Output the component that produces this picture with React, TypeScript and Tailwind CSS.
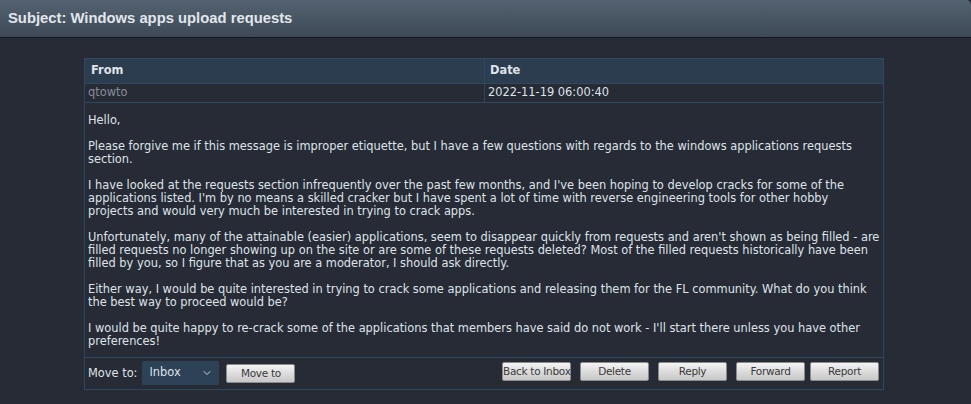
import { ChevronDown } from 'lucide-react';

const paragraphs: string[][] = [
  ['Hello,'],
  [
    'Please forgive me if this message is improper etiquette, but I have a few questions with regards to the windows applications requests',
    'section.',
  ],
  [
    "I have looked at the requests section infrequently over the past few months, and I've been hoping to develop cracks for some of the",
    "applications listed. I'm by no means a skilled cracker but I have spent a lot of time with reverse engineering tools for other hobby",
    'projects and would very much be interested in trying to crack apps.',
  ],
  [
    "Unfortunately, many of the attainable (easier) applications, seem to disappear quickly from requests and aren't shown as being filled - are",
    'filled requests no longer showing up on the site or are some of these requests deleted? Most of the filled requests historically have been',
    'filled by you, so I figure that as you are a moderator, I should ask directly.',
  ],
  [
    'Either way, I would be quite interested in trying to crack some applications and releasing them for the FL community. What do you think',
    'the best way to proceed would be?',
  ],
  [
    "I would be quite happy to re-crack some of the applications that members have said do not work - I'll start there unless you have other",
    'preferences!',
  ],
];

const actions = ['Back to Inbox', 'Delete', 'Reply', 'Forward'];

function GrayButton({ label, className = '' }: { label: string; className?: string }) {
  return (
    <button
      type="button"
      className={`h-[19px] whitespace-nowrap rounded-[2px] border border-[#8c8c8c] bg-[linear-gradient(#f4f4f4,#dcdcdc_50%,#c8c8c8)] px-0 text-[10.5px] leading-none tracking-[-0.3px] text-[#3a3a3a] ${className}`}
    >
      {label}
    </button>
  );
}

export default function App() {
  return (
    <div className="min-h-[404px] bg-[#262b36] font-['DejaVu_Sans',Verdana,sans-serif] text-[#dfe3e8]">
      <div className="flex h-[38px] items-center rounded-tr-[5px] border-b border-[#14181e] bg-[linear-gradient(#546271,#3d4956)] px-2">
        <h1 className="font-['Liberation_Sans',Arial,sans-serif] text-[14.8px] font-bold text-[#e1e6ec]">
          Subject: Windows apps upload requests
        </h1>
      </div>

      <div className="pt-5">
        <table className="ml-[84px] w-[800px] border-collapse text-[11.4px]">
          <thead>
            <tr className="h-[25px] bg-[#2d3d50]">
              <th className="w-[400px] border border-[#2f4860] px-[6px] text-left font-bold">From</th>
              <th className="border border-[#2f4860] px-[5px] text-left font-bold">Date</th>
            </tr>
          </thead>
          <tbody>
            <tr className="h-[19px]">
              <td className="border border-[#2f4860] px-[3px] text-[#868d96]">qtowto</td>
              <td className="border border-[#2f4860] px-[3px]">2022-11-19 06:00:40</td>
            </tr>
            <tr>
              <td colSpan={2} className="h-[255px] border border-[#2f4860] px-[3px] pt-[11px] align-top leading-[13px]">
                {paragraphs.map((lines, i) => (
                  <p key={i} className="whitespace-nowrap [&:not(:last-child)]:mb-[13px]">
                    {lines.map((line, j) => (
                      <span key={j} className="block">
                        {line}
                      </span>
                    ))}
                  </p>
                ))}
              </td>
            </tr>
            <tr>
              <td colSpan={2} className="h-[32px] border border-[#2f4860] px-[3px] pt-[3px] align-top">
                <div className="flex items-start">
                  <span className="mt-[4px]">Move to:</span>
                  <div className="ml-[5px] flex h-[24px] w-[77px] items-center justify-between rounded-[2px] bg-[#2d4157] pl-[7px] pr-[6px]">
                    <span>Inbox</span>
                    <ChevronDown size={12} strokeWidth={2} className="text-[#c8cdd3]" />
                  </div>
                  <GrayButton label="Move to" className="ml-[7px] mt-[3px] w-[69px]" />
                  <div className="ml-auto mt-[1px] flex pr-[1px]">
                    <div className="flex gap-[9px]">
                      {actions.map((a) => (
                        <GrayButton key={a} label={a} className="w-[69px]" />
                      ))}
                    </div>
                    <GrayButton label="Report" className="ml-[5px] w-[69px]" />
                  </div>
                </div>
              </td>
            </tr>
          </tbody>
        </table>
      </div>
    </div>
  );
}
